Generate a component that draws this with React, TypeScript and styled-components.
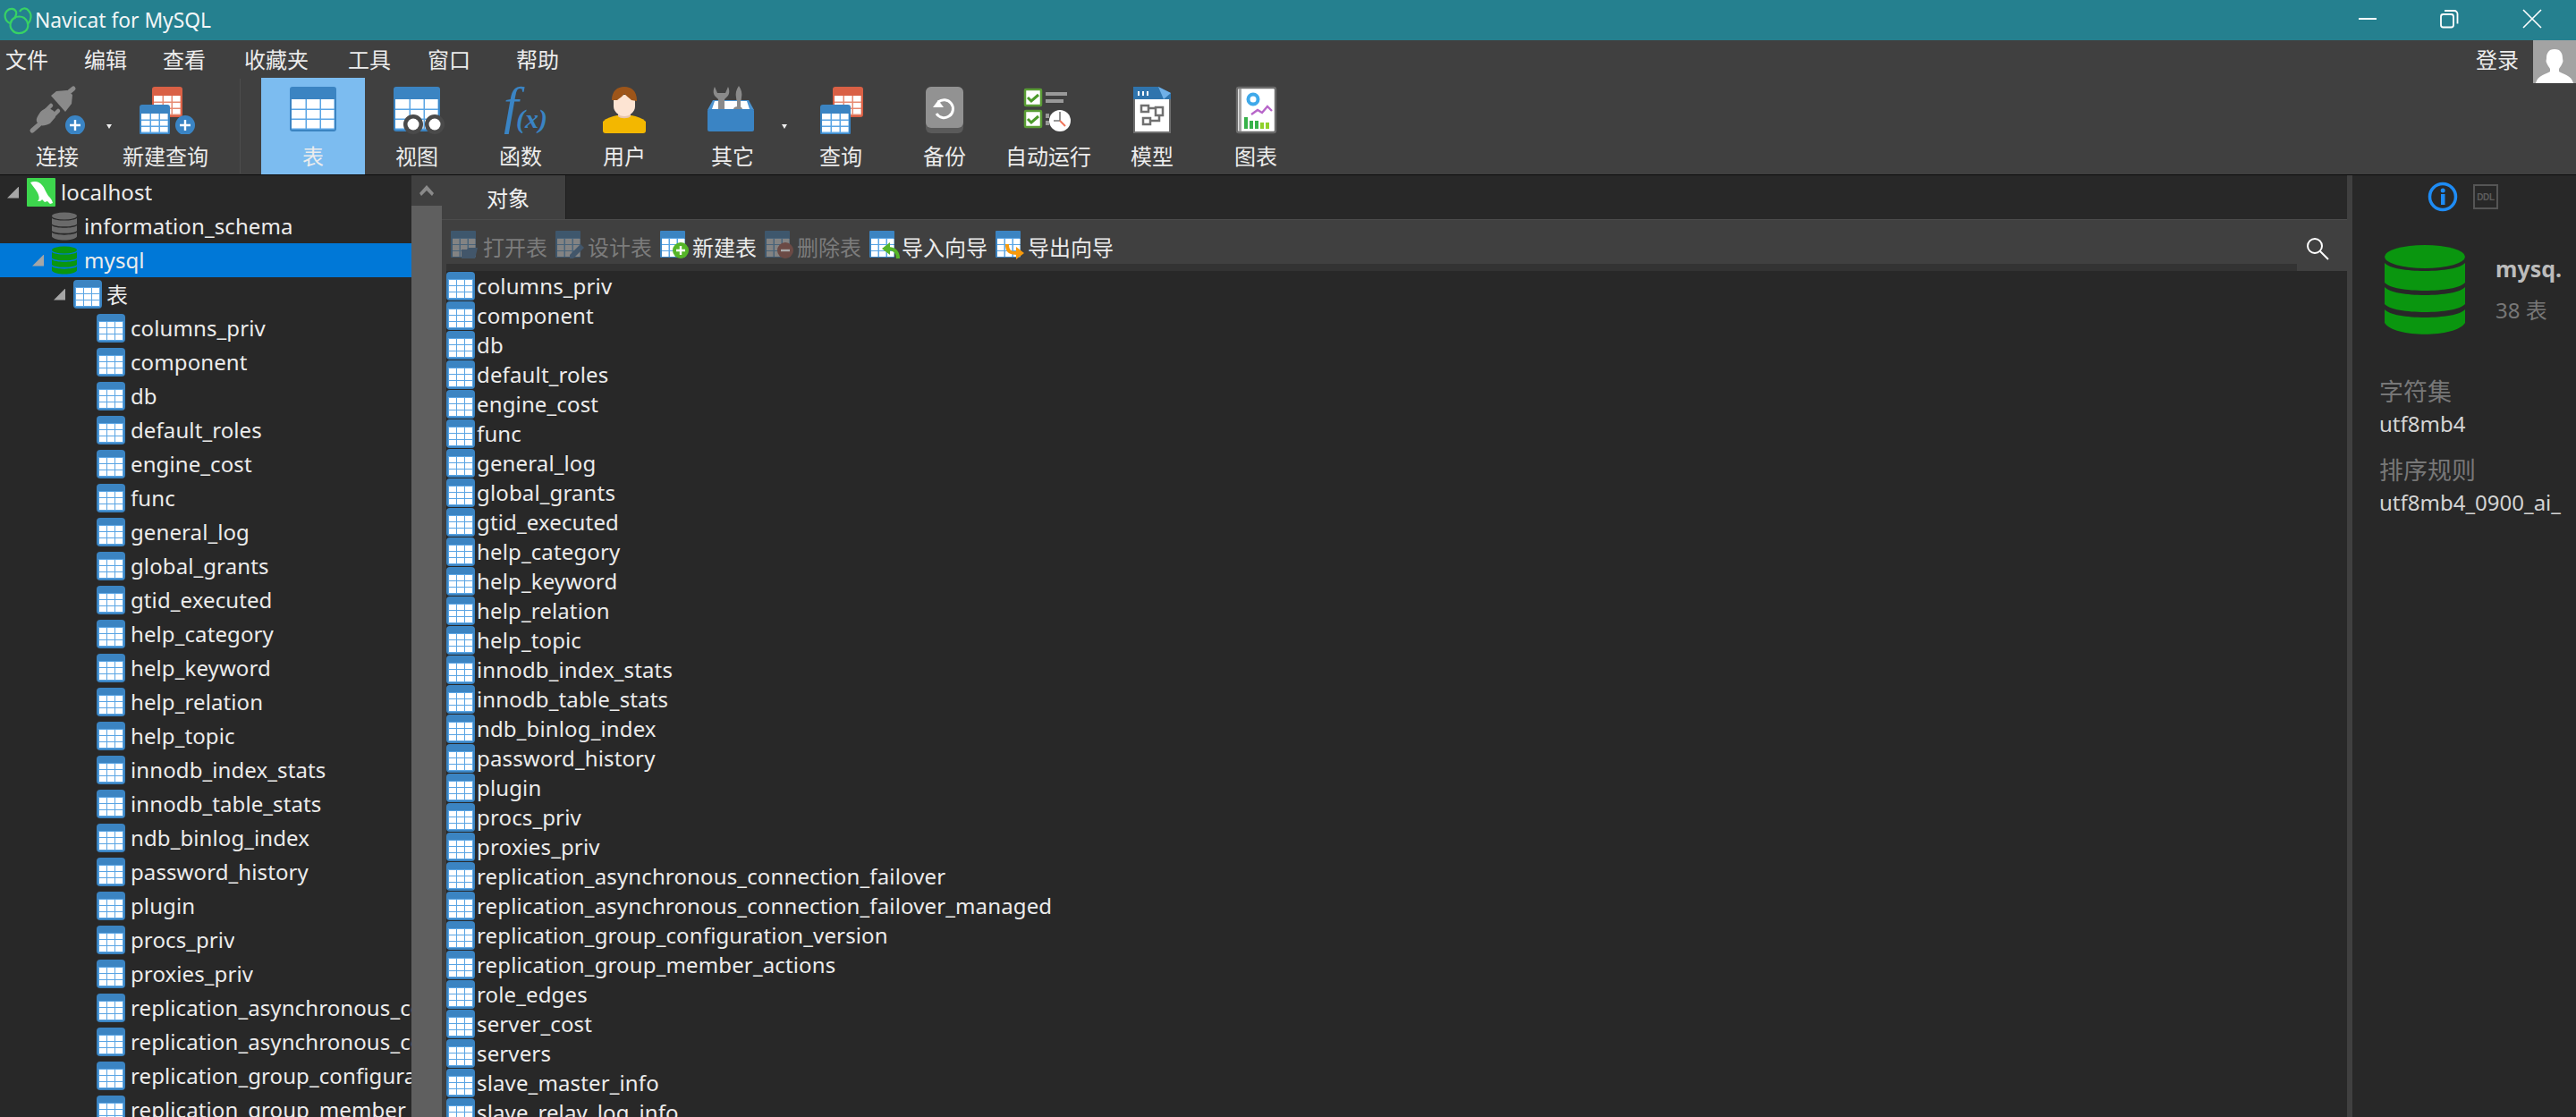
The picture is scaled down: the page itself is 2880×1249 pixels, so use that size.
import React from "react";
import styled, { createGlobalStyle } from "styled-components";

const FONT = `"Noto Sans", "Noto Sans CJK SC", sans-serif`;

const Global = createGlobalStyle`
  html, body { margin: 0; padding: 0; background: #282828; overflow: hidden; }
  * { box-sizing: border-box; }
`;

const Page = styled.div`
  width: 2880px; height: 1249px; display: flex; flex-direction: column; overflow: hidden;
  font-family: ${FONT}; font-size: 24px; color: #ececec; background: #282828;
`;
const TitleBar = styled.header`
  height: 45px; flex: none; background: #25808f; display: flex; align-items: center; padding-left: 3px;
`;
const TitleText = styled.span` margin-left: 2px; font-size: 22.8px; color: #f2f6f7; `;
const WinControls = styled.div` margin-left: auto; display: flex; align-items: center; `;
const WinBtn = styled.svg<{ $w?: number }>` width: ${p => p.$w ?? 93}px; height: 45px; display: block; `;
const MenuBar = styled.nav`
  height: 42px; flex: none; background: #404040; display: flex; align-items: flex-start; position: relative;
`;
const MenuItem = styled.span<{ $w: number }>`
  width: ${p => p.$w}px; padding-left: 6px; padding-top: 3px; line-height: 38px; height: 42px; white-space: nowrap; flex: none;
`;
const Login = styled.div` margin-left: auto; display: flex; align-items: flex-start; `;
const LoginText = styled.span` line-height: 38px; padding-top: 3px; margin-right: 16px; display: block; `;
const Avatar = styled.svg` width: 48px; height: 48px; display: block; background: #a3a3a3; `;
const ToolBar = styled.div`
  height: 109px; flex: none; background: #404040; border-bottom: 1px solid #0d0d0d;
  display: flex; padding-left: 6px;
`;
const ToolBtn = styled.div<{ $active?: boolean; $gap?: number }>`
  width: 116px; height: 108px; flex: none; padding-top: 3px; display: flex; flex-direction: column; align-items: center;
  margin-left: ${p => p.$gap ?? 0}px;
  background: ${p => (p.$active ? "#7cbcf0" : "transparent")};
`;
const ToolIcon = styled.svg` width: 116px; height: 60px; display: block; flex: none; `;
const ToolLabel = styled.span` line-height: 34px; margin-top: 8px; white-space: nowrap; `;
const Drop = styled.i<{ $w: number }>`
  width: ${p => p.$w}px; flex: none; position: relative; display: block;
  &::after {
    content: ""; position: absolute; left: -3px; top: 52px; border-left: 3px solid transparent;
    border-right: 3px solid transparent; border-top: 5px solid #eee;
  }
`;
const Sep = styled.i`
  width: 1px; height: 106px; background: #4d4d4d; margin: 1px 23px 0 25px; flex: none; display: block;
`;
const Body = styled.div` flex: 1; display: flex; min-height: 0; `;
const Sidebar = styled.aside` width: 460px; flex: none; overflow: hidden; background: #282828; `;
const TreeRow = styled.div<{ $pad: number; $sel?: boolean }>`
  height: 38px; display: flex; align-items: center; white-space: nowrap; padding-left: ${p => p.$pad}px;
  background: ${p => (p.$sel ? "#0078d7" : "transparent")};
`;
const CaretSlot = styled.span` width: 22px; flex: none; display: flex; `;
const Caret = styled.i`
  width: 13px; height: 13px; display: block; background: #a6a6a6; clip-path: polygon(100% 0, 100% 100%, 0 100%);
`;
const TreeLabel = styled.span<{ $gap: number }>`
  margin-left: ${p => p.$gap}px; margin-top: -2px; min-width: 0; overflow: hidden; letter-spacing: 0.1px;
`;
const ScrollTrack = styled.div`
  width: 34px; flex: none; background: #5f5f5f; display: flex; flex-direction: column;
`;
const ScrollUp = styled.div`
  height: 34px; background: #404040; display: flex; align-items: center; justify-content: center;
`;
const Main = styled.main`
  flex: 1; min-width: 0; display: flex; flex-direction: column; border-left: 5px solid #404040; background: #282828;
`;
const Tabs = styled.div` height: 49px; flex: none; margin-left: -5px; display: flex; `;
const Tab = styled.div`
  width: 139px; background: #404040; border-right: 1px solid #1e1e1e; display: flex; align-items: center;
  justify-content: center; padding-left: 10px; color: #f2f2f2;
`;
const ObjBar = styled.div`
  height: 50px; flex: none; background: #404040; border-top: 1px solid #4c4c4c; margin-left: -5px;
  display: flex; align-items: center; padding: 7px 20px 0 10px;
`;
const ObjBtn = styled.div<{ $off?: boolean }>`
  display: flex; align-items: center; margin-right: 9px; white-space: nowrap; color: ${p => (p.$off ? "#7c7c7c" : "#ececec")};
`;
const ObjLabel = styled.span` margin-top: 3px; `;
const ObjIcon = styled.svg` width: 36px; height: 32px; flex: none; display: block; `;
const SearchIcon = styled.svg` width: 26px; height: 26px; margin-left: auto; margin-top: 8px; display: block; `;
const Band = styled.div` height: 8px; flex: none; display: flex; `;
const BandDark = styled.div` flex: 1; background: #333; `;
const BandEnd = styled.div` width: 56px; background: #404040; `;
const List = styled.div` flex: 1; overflow: hidden; `;
const ListRow = styled.div`
  height: 33px; display: flex; align-items: center; white-space: nowrap;
`;
const ListText = styled.span` margin-left: 2px; letter-spacing: 0.14px; `;
const Divider = styled.div` width: 6px; flex: none; background: #404040; `;
const Info = styled.aside`
  width: 250px; flex: none; background: #282828; overflow: hidden; padding: 10px 0 0 30px; display: flex; flex-direction: column;
`;
const InfoTabs = styled.div` display: flex; align-items: center; height: 28px; padding-left: 54px; `;
const InfoIco = styled.svg` width: 34px; height: 34px; display: block; flex: none; `;
const Ddl = styled.div`
  width: 28px; height: 28px; margin-left: 17px; border: 2px solid #555; color: #5c5c5c; font: bold 10px "Liberation Sans", sans-serif;
  display: flex; align-items: center; justify-content: center; flex: none; letter-spacing: -0.3px;
`;
const Head = styled.div` display: flex; margin-top: 40px; padding-left: 6px; `;
const DbBig = styled.svg` width: 90px; height: 100px; flex: none; display: block; `;
const HeadText = styled.div` margin-left: 34px; `;
const DbName = styled.div` font-weight: 700; font-size: 25px; color: #bcbcbc; line-height: 34px; margin-top: 9px; white-space: nowrap; `;
const DbCount = styled.div` color: #777; line-height: 34px; margin-top: 13px; white-space: nowrap; `;
const Field = styled.div` color: #777; font-size: 27px; line-height: 36px; white-space: nowrap; `;
const Value = styled.div` color: #d4d4d4; line-height: 36px; white-space: nowrap; margin-bottom: 16px; `;
const Fields = styled.div` margin-top: 46px; `;
const PlainSvg = styled.svg` display: block; flex: none; `;

const TableCells: React.FC<{ x: number; y: number; w: number; h: number; top: number; bg?: string; grid?: string }> = ({ x, y, w, h, top, bg = "#3b84c2", grid = "#5aa5e4" }) => {
  const cw = (w - 4) / 3;
  const ch = (h - top - 3) / 3;
  return (
    <g>
      <rect x={x} y={y} width={w} height={h} rx={3} fill={bg} />
      <rect x={x + 2} y={y + top} width={w - 4} height={h - top - 2} fill={grid} />
      {[0, 1, 2].map(r =>
        [0, 1, 2].map(c => (
          <rect key={`${r}${c}`} x={x + 2 + c * cw + (c ? 1 : 0)} y={y + top + r * ch + (r ? 1 : 0)} width={cw - (c ? 1 : 0) - 0.5} height={ch - (r ? 1 : 0) - 0.5} fill="#fff" />
        ))
      )}
    </g>
  );
};

const SmallTable: React.FC = () => (
  <PlainSvg width="32" height="32" viewBox="0 0 32 32">
    <rect x="0" y="0" width="32" height="32" rx="4" fill="#3b84c2" />
    <rect x="2" y="8" width="28" height="22" fill="#5aa5e4" />
    {[0, 1, 2].map(r =>
      [0, 1, 2].map(c => <rect key={`${r}${c}`} x={3 + c * 9} y={9 + r * 7} width="8" height="6" fill="#fff" />)
    )}
  </PlainSvg>
);

const DbShape: React.FC<{ color: string }> = ({ color }) => (
  <g>
    <ellipse cx="45" cy="13" rx="45" ry="13" fill={color} />
    <path d="M0 20 C10 32 80 32 90 20 V42 C80 54 10 54 0 42Z" fill={color} />
    <path d="M0 47 C10 59 80 59 90 47 V66 C80 78 10 78 0 66Z" fill={color} />
    <path d="M0 72 C10 84 80 84 90 72 V87 C80 104 10 104 0 87Z" fill={color} />
  </g>
);

const DbSmall: React.FC<{ color: string }> = ({ color }) => (
  <PlainSvg width="28" height="32" viewBox="0 0 90 100">
    <DbShape color={color} />
  </PlainSvg>
);

const Logo = () => (
  <PlainSvg width="34" height="36" viewBox="0 0 34 36" fill="none" stroke="#38d264" strokeWidth="2.2">
    <path d="M8 21C2 18 1 11 5 7c3-3 8-3 10 1 1 3-1 6-2 8" />
    <path d="M19 8c2-4 7-5 10-1 4 4 3 11-1 15" />
    <path d="M13 15c-5 3-6 10-2 14 3 4 10 4 14 1 5-4 4-11-1-15-3-2-8-2-11 0" />
  </PlainSvg>
);

const ObjIconBody: React.FC<{ off?: boolean; badge: React.ReactNode }> = ({ off, badge }) => (
  <ObjIcon viewBox="0 0 36 32">
    <g opacity={off ? 0.35 : 1}>
      <rect x="0" y="0" width="28" height="30" fill="#3b84c2" rx="1" />
      <rect x="2" y="8" width="25" height="21" fill="#5aa5e4" />
      {[0, 1, 2].map(r =>
        [0, 1, 2].map(c => <rect key={`${r}${c}`} x={2 + c * 9} y={9 + r * 7} width="7.5" height="6" fill="#fff" />)
      )}
    </g>
    {badge}
  </ObjIcon>
);

const left = [
  "columns_priv", "component", "db", "default_roles", "engine_cost", "func", "general_log", "global_grants",
  "gtid_executed", "help_category", "help_keyword", "help_relation", "help_topic", "innodb_index_stats",
  "innodb_table_stats", "ndb_binlog_index", "password_history", "plugin", "procs_priv", "proxies_priv",
  "replication_asynchronous_connection_failover", "replication_asynchronous_connection_failover_managed",
  "replication_group_configuration_version", "replication_group_member_actions",
];
const more = ["role_edges", "server_cost", "servers", "slave_master_info", "slave_relay_log_info"];

const BLUE = "#3a84c4";

export default function App() {
  return (
    <Page>
      <Global />
      <TitleBar>
        <Logo />
        <TitleText>Navicat for MySQL</TitleText>
        <WinControls>
          <WinBtn viewBox="0 0 93 45"><rect x="43" y="20" width="20" height="2" fill="#fff" /></WinBtn>
          <WinBtn viewBox="0 0 93 45" fill="none" stroke="#fff" strokeWidth="1.8">
            <rect x="42" y="16" width="14" height="14.5" rx="2.5" />
            <path d="M46 12h11a3.5 3.5 0 0 1 3.5 3.5v11" />
          </WinBtn>
          <WinBtn $w={100} viewBox="0 0 100 45" fill="none" stroke="#fff" strokeWidth="1.6">
            <path d="M41 11l20 20M61 11L41 31" />
          </WinBtn>
        </WinControls>
      </TitleBar>

      <MenuBar>
        <MenuItem $w={88}>文件</MenuItem>
        <MenuItem $w={88}>编辑</MenuItem>
        <MenuItem $w={91}>查看</MenuItem>
        <MenuItem $w={116}>收藏夹</MenuItem>
        <MenuItem $w={89}>工具</MenuItem>
        <MenuItem $w={99}>窗口</MenuItem>
        <MenuItem $w={80}>帮助</MenuItem>
        <Login>
          <LoginText>登录</LoginText>
          <Avatar viewBox="0 0 48 48">
            <path d="M24 10c7 0 9 5 9 10 0 2 1 3 0 5-1 3-3 5-4 7v3c4 3 14 4 16 13H3c2-9 12-10 16-13v-3c-1-2-3-4-4-7-1-2 0-3 0-5 0-5 2-10 9-10z" fill="#fff" />
          </Avatar>
        </Login>
      </MenuBar>

      <ToolBar>
        <ToolBtn>
          <ToolIcon viewBox="6 90 116 60">
            <path d="M57 107l6-5 12-1 6 5-1 10-7 9z" fill="#8a8a8a" />
            <path d="M76 104l6-5" stroke="#8a8a8a" strokeWidth="5" strokeLinecap="round" />
            <path d="M44 127c3-5 7-6 11-6l5 3 2 3 0 4-6 7c-4 2-8 3-12 2l-3-4c-1-3 1-6 3-9z" fill="#8a8a8a" />
            <path d="M50 125l7-7M58 131l7-7" stroke="#8a8a8a" strokeWidth="4.5" strokeLinecap="round" />
            <path d="M36 146l8-7" stroke="#8a8a8a" strokeWidth="5" strokeLinecap="round" />
            <circle cx="84" cy="140" r="11" fill={BLUE} />
            <path d="M84 134v12M78 140h12" stroke="#fff" strokeWidth="2.4" />
          </ToolIcon>
          <ToolLabel>连接</ToolLabel>
        </ToolBtn>
        <Drop $w={5} />
        <ToolBtn>
          <ToolIcon viewBox="127 90 116 60">
            <TableCells x={170} y={97} w={34} h={34} top={10} bg="#d96045" grid="#e68a72" />
            <TableCells x={156} y={117} w={34} h={34} top={10} />
            <circle cx="207" cy="140" r="11" fill={BLUE} />
            <path d="M207 134v12M201 140h12" stroke="#fff" strokeWidth="2.4" />
          </ToolIcon>
          <ToolLabel>新建查询</ToolLabel>
        </ToolBtn>
        <Sep />
        <ToolBtn $active>
          <ToolIcon viewBox="292 90 116 60">
            <TableCells x={324} y={97} w={52} h={50} top={14} />
          </ToolIcon>
          <ToolLabel>表</ToolLabel>
        </ToolBtn>
        <ToolBtn>
          <ToolIcon viewBox="408 90 116 60">
            <TableCells x={440} y={97} w={52} h={50} top={14} />
            <circle cx="462" cy="139" r="11" fill="#4a4a4a" />
            <circle cx="486" cy="139" r="11" fill="#4a4a4a" />
            <circle cx="462" cy="139" r="6.5" fill="#fff" />
            <circle cx="486" cy="139" r="6.5" fill="#fff" />
          </ToolIcon>
          <ToolLabel>视图</ToolLabel>
        </ToolBtn>
        <ToolBtn>
          <ToolIcon viewBox="524 90 116 60">
            <text x="563" y="138" fontFamily="Liberation Serif, serif" fontStyle="italic" fontSize="60" fill={BLUE}>f</text>
            <text x="577" y="143" fontFamily="Liberation Serif, serif" fontStyle="italic" fontWeight="700" fontSize="30" fill={BLUE}>(x)</text>
          </ToolIcon>
          <ToolLabel>函数</ToolLabel>
        </ToolBtn>
        <ToolBtn>
          <ToolIcon viewBox="640 90 116 60">
            <path d="M674 136c4-4 10-6 16-7h16c6 1 12 3 16 7v10c0 2-1 3-3 3h-42c-2 0-3-1-3-3z" fill="#f3b700" />
            <path d="M691 122h14v8c-2 3-12 3-14 0z" fill="#e8c5ad" />
            <path d="M686 106h24v13c0 6-6 11-12 11s-12-5-12-11z" fill="#fde4d3" />
            <path d="M684 112c0-10 6-15 14-15s14 5 14 15v1l-6-1c-3-3-6-5-8-7-2 3-6 5-8 7z" fill="#9d5519" />
          </ToolIcon>
          <ToolLabel>用户</ToolLabel>
        </ToolBtn>
        <ToolBtn $gap={5}>
          <ToolIcon viewBox="761 90 116 60">
            <path d="M799 97c-2 4-2 9 2 12l2 2v16h7v-16l2-2c4-3 4-8 2-12l-3 7h-9z" fill="#8a8a8a" />
            <path d="M826 96c-3 4-4 9-3 13l1 8v7h4v-7l1-8c1-4 0-9-3-13z" fill="#8a8a8a" />
            <path d="M797 112h40l6 11H791z" fill="#4c93cf" />
            <path d="M799 113h36l3 9h-42z" fill="#fff" />
            <rect x="791" y="122" width="52" height="25" rx="2" fill={BLUE} />
            <path d="M820 122c0-4 10-4 10 0z" fill="#8a8a8a" />
            <rect x="803" y="111" width="7" height="11" fill="#8a8a8a" />
            <rect x="824" y="111" width="4" height="9" fill="#8a8a8a" />
          </ToolIcon>
          <ToolLabel>其它</ToolLabel>
        </ToolBtn>
        <Drop $w={5} />
        <ToolBtn>
          <ToolIcon viewBox="882 90 116 60">
            <TableCells x={931} y={97} w={34} h={34} top={10} bg="#d96045" grid="#e68a72" />
            <TableCells x={917} y={117} w={34} h={34} top={10} />
          </ToolIcon>
          <ToolLabel>查询</ToolLabel>
        </ToolBtn>
        <ToolBtn>
          <ToolIcon viewBox="998 90 116 60">
            <rect x="1035" y="97" width="42" height="52" rx="6" fill="#5a5a5a" />
            <rect x="1035" y="97" width="42" height="46" rx="6" fill="#929292" />
            <path d="M1049 114a10 10 0 1 1-2 13" fill="none" stroke="#fff" strokeWidth="3" />
            <path d="M1043 120h12l-6-8z" fill="#fff" />
          </ToolIcon>
          <ToolLabel>备份</ToolLabel>
        </ToolBtn>
        <ToolBtn>
          <ToolIcon viewBox="1114 90 116 60">
            <rect x="1146" y="100" width="18" height="18" rx="1" fill="#fff" stroke="#5a9c35" strokeWidth="2.5" />
            <rect x="1146" y="124" width="18" height="18" rx="1" fill="#fff" stroke="#5a9c35" strokeWidth="2.5" />
            <path d="M1149 109l4 4 8-7M1149 133l4 4 8-7" fill="none" stroke="#4b9a2a" strokeWidth="3" />
            <rect x="1169" y="103" width="24" height="4" fill="#999" />
            <rect x="1169" y="111" width="20" height="4" fill="#999" />
            <rect x="1169" y="127" width="4" height="5" fill="#999" />
            <rect x="1169" y="135" width="4" height="5" fill="#999" />
            <circle cx="1185" cy="135" r="12" fill="#fff" />
            <path d="M1185 125v10h-7" fill="none" stroke="#777" strokeWidth="1.6" />
            <path d="M1185 135l6 6" stroke="#f0755a" strokeWidth="2" />
          </ToolIcon>
          <ToolLabel>自动运行</ToolLabel>
        </ToolBtn>
        <ToolBtn>
          <ToolIcon viewBox="1230 90 116 60">
            <rect x="1268" y="110" width="40" height="38" fill="#fff" stroke="#6f6f6f" strokeWidth="2" />
            <path d="M1267 97h28l14 7v7h-42z" fill="#2f74ad" />
            <path d="M1295 97l14 7-8 7z" fill="#6fb0e8" />
            <path d="M1272 102h2v5h-2zM1277 102h2v5h-2zM1282 102h2v5h-2z" fill="#fff" />
            <g fill="none" stroke="#707070" strokeWidth="2.5">
              <rect x="1276" y="118" width="8" height="7" />
              <rect x="1292" y="120" width="8" height="9" />
              <rect x="1278" y="132" width="8" height="7" />
              <path d="M1284 121h8M1296 129v6h-10" />
            </g>
          </ToolIcon>
          <ToolLabel>模型</ToolLabel>
        </ToolBtn>
        <ToolBtn>
          <ToolIcon viewBox="1346 90 116 60">
            <rect x="1383" y="98" width="43" height="50" rx="2" fill="#fff" stroke="#6c6c6c" strokeWidth="2.4" />
            <rect x="1385" y="99" width="3" height="48" fill="#a5a5a5" />
            <circle cx="1401" cy="111" r="5.5" fill="none" stroke="#3fa9ea" strokeWidth="4" />
            <path d="M1399 128l7-5 5 3 6-7 5 5" fill="none" stroke="#b765c9" strokeWidth="2.4" />
            <path d="M1391 131h4v13h-4z M1397 135h4v9h-4z" fill="#37b24a" />
            <path d="M1403 135h4v9h-4z" fill="#37b24a" />
            <path d="M1409 137h4v7h-4zM1415 137h4v7h-4z" fill="#8fd12a" />
          </ToolIcon>
          <ToolLabel>图表</ToolLabel>
        </ToolBtn>
      </ToolBar>

      <Body>
        <Sidebar>
          <TreeRow $pad={8}>
            <CaretSlot><Caret /></CaretSlot>
            <PlainSvg width="32" height="32" viewBox="0 0 32 32">
              <rect width="32" height="32" fill="#3dd64d" rx="1" />
              <path d="M4 5c5-2 10-1 13 3 3 3 4 8 7 12 2 2 4 4 5 8l-3 1-3-3-3 1-3-3c-1 2-3 2-5 2 2-2 2-4 1-7C12 15 8 11 4 5z" fill="#fff" />
            </PlainSvg>
            <TreeLabel $gap={6}>localhost</TreeLabel>
          </TreeRow>
          <TreeRow $pad={36}>
            <CaretSlot />
            <DbSmall color="#6a6a6a" />
            <TreeLabel $gap={8}>information_schema</TreeLabel>
          </TreeRow>
          <TreeRow $pad={36} $sel>
            <CaretSlot><Caret /></CaretSlot>
            <DbSmall color="#0a960f" />
            <TreeLabel $gap={8}>mysql</TreeLabel>
          </TreeRow>
          <TreeRow $pad={60}>
            <CaretSlot><Caret /></CaretSlot>
            <SmallTable />
            <TreeLabel $gap={5}>表</TreeLabel>
          </TreeRow>
          {left.map(n => (
            <TreeRow key={n} $pad={86}>
              <CaretSlot />
              <SmallTable />
              <TreeLabel $gap={6}>{n}</TreeLabel>
            </TreeRow>
          ))}
        </Sidebar>
        <ScrollTrack>
          <ScrollUp>
            <svg width="16" height="12" viewBox="0 0 16 12"><path d="M0 9l8-9 8 9-2 3-6-6-6 6z" fill="#8a8a8a" /></svg>
          </ScrollUp>
        </ScrollTrack>
        <Main>
          <Tabs><Tab>对象</Tab></Tabs>
          <ObjBar>
            <ObjBtn $off>
              <ObjIconBody off badge={<path d="M12 21h6l2-2h10l-3 12H12z" fill="#42566a" />} />
              <ObjLabel>打开表</ObjLabel>
            </ObjBtn>
            <ObjBtn $off>
              <ObjIconBody off badge={<path d="M16 27l12-12 4 4-12 12h-4z" fill="#42566a" />} />
              <ObjLabel>设计表</ObjLabel>
            </ObjBtn>
            <ObjBtn>
              <ObjIconBody badge={<g><circle cx="23" cy="22" r="9" fill="#55b528" /><path d="M23 17v10M18 22h10" stroke="#fff" strokeWidth="2.4" /></g>} />
              <ObjLabel>新建表</ObjLabel>
            </ObjBtn>
            <ObjBtn $off>
              <ObjIconBody off badge={<g><circle cx="23" cy="22" r="9" fill="#6b4a45" /><path d="M18 22h10" stroke="#aaa" strokeWidth="2.4" /></g>} />
              <ObjLabel>删除表</ObjLabel>
            </ObjBtn>
            <ObjBtn>
              <ObjIconBody badge={<g fill="none"><path d="M32 31c0-8-5-11-11-11" stroke="#55b528" strokeWidth="4" /><path d="M23 13v14l-9-7z" fill="#55b528" /></g>} />
              <ObjLabel>导入向导</ObjLabel>
            </ObjBtn>
            <ObjBtn>
              <ObjIconBody badge={<g fill="none"><path d="M13 15c0 8 3 10 11 10" stroke="#f79a0c" strokeWidth="4" /><path d="M23 18v14l9-7z" fill="#f79a0c" /></g>} />
              <ObjLabel>导出向导</ObjLabel>
            </ObjBtn>
            <SearchIcon viewBox="0 0 26 26" fill="none" stroke="#fff" strokeWidth="2">
              <circle cx="10" cy="10" r="8" />
              <path d="M16 16l9 9" />
            </SearchIcon>
          </ObjBar>
          <Band><BandDark /><BandEnd /></Band>
          <List>
            {[...left, ...more].map(n => (
              <ListRow key={n}>
                <SmallTable />
                <ListText>{n}</ListText>
              </ListRow>
            ))}
          </List>
        </Main>
        <Divider />
        <Info>
          <InfoTabs>
            <InfoIco viewBox="0 0 34 34">
              <circle cx="17" cy="17" r="14.5" fill="none" stroke="#1e8cf5" strokeWidth="3.5" />
              <rect x="15" y="14" width="4.5" height="12" fill="#1e8cf5" />
              <circle cx="17.2" cy="10" r="2.5" fill="#1e8cf5" />
            </InfoIco>
            <Ddl>DDL</Ddl>
          </InfoTabs>
          <Head>
            <DbBig viewBox="0 0 90 100"><DbShape color="#0a960f" /></DbBig>
            <HeadText>
              <DbName>mysq.</DbName>
              <DbCount>38 表</DbCount>
            </HeadText>
          </Head>
          <Fields>
            <Field>字符集</Field>
            <Value>utf8mb4</Value>
            <Field>排序规则</Field>
            <Value>utf8mb4_0900_ai_</Value>
          </Fields>
        </Info>
      </Body>
    </Page>
  );
}
